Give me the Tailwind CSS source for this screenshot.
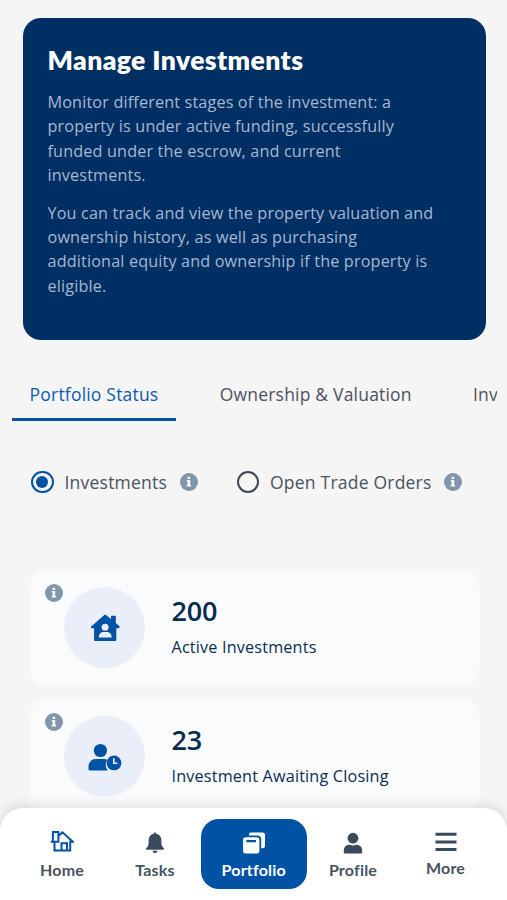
<!DOCTYPE html>
<html lang="en">
<head>
<meta charset="utf-8">
<meta name="viewport" content="width=device-width, initial-scale=1">
<title>Portfolio</title>
<script src="https://cdn.jsdelivr.net/npm/@tailwindcss/browser@4"></script>
</head>
<body class="bg-[#f5f5f5] font-['Open_Sans',sans-serif]">
<svg class="hidden" aria-hidden="true">
  <symbol id="info" viewBox="0 0 18 18">
    <circle cx="9" cy="9" r="9" fill="#8096ab"/>
    <path fill="#f8fafc" d="M7.6 3.7h2.6v2.2H7.6zM6.8 7h3.4v5h.9v1.5H6.7V12h.9V8.5h-.8z"/>
  </symbol>
</svg>
<div class="relative h-[900px] w-[507px] overflow-hidden">
  <main class="flex flex-col pt-[18px]">
    <section class="mr-[21.5px] ml-[22.5px] h-[322px] rounded-[18px] bg-[#002f63] px-[25px] pt-[24px]">
      <h1 class="h-[36px] font-['Lato',sans-serif] text-[26.5px] leading-[36px] font-extrabold tracking-[0.4px] whitespace-nowrap text-white">Manage Investments</h1>
      <div class="mt-[12px] flex flex-col gap-[13.5px] text-[16.2px] leading-[24.3px] tracking-[0.155px] whitespace-nowrap text-[#a6b7d3]">
        <p>Monitor different stages of the investment: a<br>property is under active funding, successfully<br>funded under the escrow, and current<br>investments.</p>
        <p>You can track and view the property valuation and<br>ownership history, as well as purchasing<br>additional equity and ownership if the property is<br>eligible.</p>
      </div>
    </section>

    <nav class="mt-[28px] mr-[10px] ml-[12px] flex h-[53px] gap-[26.5px] overflow-hidden text-[17.5px] leading-[53px] tracking-[0.2px] whitespace-nowrap text-[#4b5360]">
      <a class="w-[164px] shrink-0 border-b-[3px] border-[#0052a5] text-center text-[#0f5aac]">Portfolio Status</a>
      <a class="w-[226.5px] shrink-0 text-center">Ownership &amp; Valuation</a>
      <a class="shrink-0 pl-[17.5px]">Investment History</a>
    </nav>

    <div class="mt-[45px] ml-[31px] flex h-[32px] items-center text-[17.5px] tracking-[0.22px] whitespace-nowrap text-[#4b5360]">
      <span class="flex size-[22.5px] items-center justify-center rounded-full border-[2px] border-[#0052a5]"><span class="size-[12px] rounded-full bg-[#0052a5]"></span></span>
      <span class="ml-[11px] w-[103px]">Investments</span>
      <svg class="ml-[12.5px] size-[18px]"><use href="#info"/></svg>
      <span class="ml-[38.5px] size-[22.5px] rounded-full border-[2px] border-[#3f4852]"></span>
      <span class="ml-[11px] w-[161px]">Open Trade Orders</span>
      <svg class="ml-[12.5px] size-[18px]"><use href="#info"/></svg>
    </div>

    <div class="mt-[72px] mr-[28px] ml-[30px] flex flex-col gap-[13px]">
      <article class="flex h-[116px] rounded-[18px] bg-[#fafbfd] pt-[14px] pl-[15px] shadow-[0_0_6px_rgba(255,255,255,0.5)]">
        <svg class="size-[18px]"><use href="#info"/></svg>
        <div class="mt-[3px] ml-[1px] flex size-[81px] items-center justify-center rounded-full bg-[#e9eef9]">
          <svg class="size-[30px]" viewBox="0 0 30 30" fill="#0052a5">
            <path d="M14.3 1.9a1.2 1.2 0 0 1 1.6 0l5.1 4.2V3.4c0-.4.3-.7.7-.7h3.4c.4 0 .7.3.7.7v6.7l3.4 2.9c.6.5.6 1 .3 1.4l-.5.5c-.3.3-.6.4-1 .4h-1.7v11.5c0 .8-.5 1.2-1.2 1.2H5.3c-.8 0-1.2-.4-1.2-1.2V15.3H2c-.5 0-.8-.2-1-.5-.4-.5-.3-1 .2-1.4z"/>
            <circle cx="15.1" cy="14.2" r="3.5" fill="#e9eef9"/>
            <path d="M8.7 24.5c0-3.5 2.2-5.6 5-5.6h3c2.8 0 5 2.1 5 5.6z" fill="#e9eef9"/>
          </svg>
        </div>
        <div class="mt-[9px] ml-[26.5px] whitespace-nowrap text-[#0b2d52]">
          <p class="text-[27px] leading-[36px] font-semibold tracking-[-0.2px] text-[#062b4f]">200</p>
          <p class="mt-[6px] text-[16.2px] leading-[24px] tracking-[0.18px]">Active Investments</p>
        </div>
      </article>
      <article class="flex h-[116px] rounded-[18px] bg-[#fafbfd] pt-[14px] pl-[15px] shadow-[0_0_6px_rgba(255,255,255,0.5)]">
        <svg class="size-[18px]"><use href="#info"/></svg>
        <div class="mt-[3px] ml-[1px] flex size-[81px] items-center justify-center rounded-full bg-[#e9eef9]">
          <svg class="h-[30px] w-[34px]" viewBox="0 0 34 30" fill="#0052a5">
            <circle cx="12.4" cy="8.5" r="6.6"/>
            <path d="M.5 27v-2c0-5 3-8 7.500-8h7.800c1.300 0 2.500.2 3.500.7-2 3-2.200 7.300.5 10.800H2c-1 0-1.500-.6-1.500-1.500z"/>
            <circle cx="26" cy="20.900" r="7.400"/>
            <path d="M25.800 16.200v5h3.700" fill="none" stroke="#e9eef9" stroke-width="1.600"/>
          </svg>
        </div>
        <div class="mt-[9px] ml-[26.5px] whitespace-nowrap text-[#0b2d52]">
          <p class="text-[27px] leading-[36px] font-semibold tracking-[-0.2px] text-[#062b4f]">23</p>
          <p class="mt-[6px] text-[16.2px] leading-[24px] tracking-[0.18px]">Investment Awaiting Closing</p>
        </div>
      </article>
    </div>
  </main>

  <footer class="absolute inset-x-0 bottom-0 flex h-[92px] rounded-t-[23px] bg-white pt-[11px] pl-[16px] font-['Lato',sans-serif] text-[16px] leading-[22px] font-bold tracking-[0.2px] text-[#465361] shadow-[0_-2px_14px_rgba(0,0,0,0.13)]">
    <a class="flex h-[70px] w-[92px] flex-col items-center pt-[11px]">
      <svg class="size-[24px]" viewBox="0 0 24 24" fill="none" stroke="#0052a5" stroke-width="2">
        <path d="M.8 11.800H4.500v8.700h15.700v-8.700h2.600L12.500 2.300 8.400 6v5.800H4.500M2.900 11.800V2h5.500v4M11.500 20.500v-7.300h5.500v7.300"/>
      </svg>
      <span class="mt-[5px]">Home</span>
    </a>
    <a class="flex h-[70px] w-[94px] flex-col items-center pt-[12px]">
      <svg class="h-[23px] w-[20px]" viewBox="0 0 20 23" fill="#394b5c">
        <path d="M10 1.500c.7 0 1.200.5 1.200 1.200 3.400.6 5.200 3.100 5.200 6.500v2.700c0 2.300.7 3.700 2.300 5.100.7.700.3 1.700-.7 1.700H2c-1 0-1.400-1-.7-1.700 1.600-1.400 2.300-2.800 2.300-5.100V9.200c0-3.400 1.800-5.900 5.200-6.500 0-.7.500-1.200 1.200-1.200zM7.400 19.700h5.200a2.600 2.200 0 0 1-5.200 0z"/>
      </svg>
      <span class="mt-[5px]">Tasks</span>
    </a>
    <a class="-ml-px flex h-[70px] w-[105.5px] flex-col items-center rounded-[18px] bg-[#0052a5] pt-[12px] text-white">
      <svg class="size-[24px]" viewBox="0 0 24 24">
        <path d="M7 4.400V3.200a2 2 0 0 1 2-1.800h11.500A2.500 2.500 0 0 1 23 3.900v11.200a2.200 2.200 0 0 1-2.200 2.200h-1.600V8.200A3.800 3.800 0 0 0 15.400 4.400z" fill="#fff"/>
        <path fill-rule="evenodd" d="M3.600 6.200h11.300a2.500 2.500 0 0 1 2.500 2.500v11.400a2.500 2.500 0 0 1-2.500 2.500H3.600a2.500 2.500 0 0 1-2.500-2.500V8.700a2.500 2.500 0 0 1 2.500-2.500zM4.400 9v2.200H14V9z" fill="#fff"/>
      </svg>
      <span class="mt-[4px]">Portfolio</span>
    </a>
    <a class="flex h-[70px] w-[93px] flex-col items-center pt-[12px]">
      <svg class="h-[24px] w-[20px]" viewBox="0 0 20 24" fill="#394b5c">
        <circle cx="10" cy="7.200" r="5.400"/><path d="M.8 21v-1.500c0-3.600 2.300-5.800 5.700-5.800 2.300.9 4.700.9 7 0 3.400 0 5.700 2.200 5.700 5.800V21c0 1-.5 1.500-1.500 1.500H2.300c-1 0-1.500-.5-1.500-1.500z"/>
      </svg>
      <span class="mt-[4px]">Profile</span>
    </a>
    <a class="flex h-[70px] w-[92px] flex-col items-center pt-[13px]">
      <svg class="h-[20px] w-[22px]" viewBox="0 0 22 20" fill="#394b5c"><path d="M.5.800h21v3H.5zM.5 8.400h21v3H.5zM.5 16h21v3H.5z"/></svg>
      <span class="mt-[5px]">More</span>
    </a>
  </footer>
</div>
</body>
</html>
